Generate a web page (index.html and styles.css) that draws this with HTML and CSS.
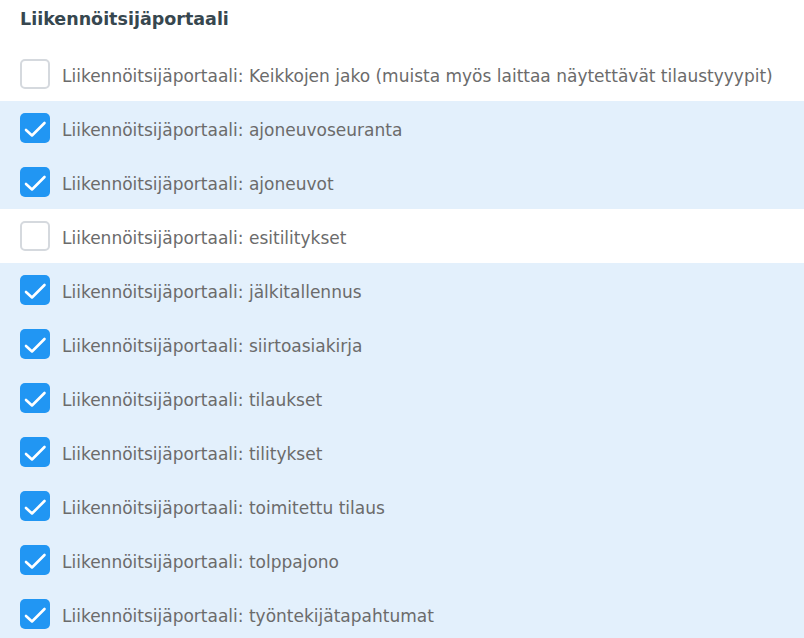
FILE: index.html
```html
<!DOCTYPE html>
<html lang="fi">
<head>
<meta charset="utf-8">
<link rel="stylesheet" href="styles.css">
</head>
<body>
<div class="panel">
  <h3 class="title">Liikennöitsijäportaali</h3>
  <ul class="list">
    <li class="row"><span class="box"></span><span class="label">Liikennöitsijäportaali: Keikkojen jako (muista myös laittaa näytettävät tilaustyyypit)</span></li>
    <li class="row on"><span class="box"><svg viewBox="0 0 30 30"><path d="M6 17 L12 22.5 L24.5 10"/></svg></span><span class="label">Liikennöitsijäportaali: ajoneuvoseuranta</span></li>
    <li class="row on"><span class="box"><svg viewBox="0 0 30 30"><path d="M6 17 L12 22.5 L24.5 10"/></svg></span><span class="label">Liikennöitsijäportaali: ajoneuvot</span></li>
    <li class="row"><span class="box"></span><span class="label">Liikennöitsijäportaali: esitilitykset</span></li>
    <li class="row on"><span class="box"><svg viewBox="0 0 30 30"><path d="M6 17 L12 22.5 L24.5 10"/></svg></span><span class="label">Liikennöitsijäportaali: jälkitallennus</span></li>
    <li class="row on"><span class="box"><svg viewBox="0 0 30 30"><path d="M6 17 L12 22.5 L24.5 10"/></svg></span><span class="label">Liikennöitsijäportaali: siirtoasiakirja</span></li>
    <li class="row on"><span class="box"><svg viewBox="0 0 30 30"><path d="M6 17 L12 22.5 L24.5 10"/></svg></span><span class="label">Liikennöitsijäportaali: tilaukset</span></li>
    <li class="row on"><span class="box"><svg viewBox="0 0 30 30"><path d="M6 17 L12 22.5 L24.5 10"/></svg></span><span class="label">Liikennöitsijäportaali: tilitykset</span></li>
    <li class="row on"><span class="box"><svg viewBox="0 0 30 30"><path d="M6 17 L12 22.5 L24.5 10"/></svg></span><span class="label">Liikennöitsijäportaali: toimitettu tilaus</span></li>
    <li class="row on"><span class="box"><svg viewBox="0 0 30 30"><path d="M6 17 L12 22.5 L24.5 10"/></svg></span><span class="label">Liikennöitsijäportaali: tolppajono</span></li>
    <li class="row on"><span class="box"><svg viewBox="0 0 30 30"><path d="M6 17 L12 22.5 L24.5 10"/></svg></span><span class="label">Liikennöitsijäportaali: työntekijätapahtumat</span></li>
  </ul>
</div>
</body>
</html>
```
FILE: styles.css
```css
html, body {
  margin: 0;
  padding: 0;
  background: #ffffff;
}
body {
  font-family: "DejaVu Sans", "Noto Sans", sans-serif;
  overflow: hidden;
}
.panel {
  width: 804px;
}
.title {
  margin: 0;
  padding: 9px 20px 0 20px;
  height: 47px;
  box-sizing: border-box;
  font-size: 17.5px;
  font-weight: 700;
  color: #37474f;
  line-height: normal;
}
.list {
  list-style: none;
  margin: 0;
  padding: 0;
}
.row {
  display: flex;
  align-items: center;
  gap: 12px;
  height: 54px;
  padding: 0 20px;
}
.row.on {
  background: #e3f0fc;
}
.box {
  width: 30px;
  height: 30px;
  box-sizing: border-box;
  border: 2px solid #d5d9de;
  border-radius: 5px;
  background: #fff;
  flex: none;
  display: flex;
}
.row.on .box {
  border: none;
  background: #2196f3;
}
.box svg {
  width: 30px;
  height: 30px;
}
.box path {
  fill: none;
  stroke: #fff;
  stroke-width: 2.6;
  stroke-linecap: round;
  stroke-linejoin: round;
}
.label {
  padding-top: 3px;
  font-size: 17px;
  color: #6b6b6b;
  white-space: nowrap;
}
```
